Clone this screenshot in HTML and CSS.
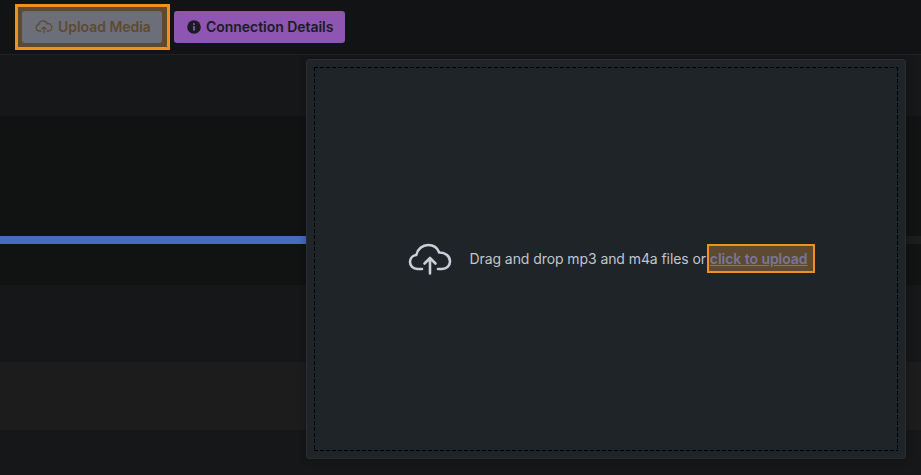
FILE: index.html
```html
<!DOCTYPE html>
<html lang="en">
<head>
<meta charset="utf-8">
<title>Upload Media</title>
<link rel="stylesheet" href="styles.css">
</head>
<body>
<header class="toolbar">
  <div class="highlight highlight-btn">
    <button class="btn btn-upload" type="button">
      <svg class="btn-icon" viewBox="0 0 20 16" width="18" height="15" fill="none" stroke="currentColor" stroke-width="1.4" stroke-linecap="round" stroke-linejoin="round"><path d="M6.5 13H4.6A3.6 3.6 0 0 1 4 5.900 5 5 0 0 1 13.600 5a4 4 0 0 1 2 8h-2.100"/><path d="M10 15V8.500M7.800 10.600 10 8.400l2.200 2.200"/></svg>
      <span class="btn-label">Upload Media</span>
    </button>
  </div>
  <button class="btn btn-conn" type="button">
    <svg class="btn-icon" viewBox="0 0 14 14" width="14" height="14"><circle cx="7" cy="7" r="6.800" fill="currentColor"/><rect x="6.100" y="6" width="1.800" height="4.600" fill="#8e55b2"/><rect x="6.100" y="3.200" width="1.800" height="1.700" fill="#8e55b2"/></svg>
    <span class="btn-label">Connection Details</span>
  </button>
</header>
<main class="content">
  <div class="rows">
    <div class="row r1"></div>
    <div class="row r2"></div>
    <div class="row r3"><div class="progress"></div></div>
    <div class="row r4"></div>
    <div class="row r5"></div>
    <div class="row r6"></div>
    <div class="row r7"></div>
  </div>
  <section class="panel">
    <div class="dropzone">
      <svg class="cloud" viewBox="0 0 44 32" width="44" height="32" fill="none" stroke="#c7d0d9" stroke-width="2.600" stroke-linecap="round" stroke-linejoin="round"><path d="M14 26H9.500C5 26 2 22.800 2 19c0-3.700 2.700-6.600 6.300-7C9.500 6.200 14.400 2 20.200 2c5 0 9.300 3 11 7.500C37.500 9.300 42 13.300 42 18.500c0 4.300-3.500 7.500-8 7.500h-4"/><path d="M22 30.500V15M16.500 20.500 22 15l5.500 5.500"/></svg>
      <p class="drop-text">Drag and drop mp3 and m4a files or <a class="link" href="#">click to upload</a></p>
    </div>
  </section>
</main>
</body>
</html>
```

FILE: styles.css
```css
* { box-sizing: border-box; }
html, body { margin: 0; height: 100%; }
body {
  width: 921px;
  height: 475px;
  overflow: hidden;
  background: #141619;
  font-family: Inter, "Liberation Sans", sans-serif;
  display: flex;
  flex-direction: column;
}
.toolbar {
  height: 55px;
  flex: none;
  display: flex;
  align-items: center;
  gap: 4px;
  padding: 0 0 1px 15px;
  background: #111315;
  border-bottom: 1px solid #202226;
}
.highlight {
  background: #5e4a30;
  border: 3px solid #f2901f;
}
.highlight-btn {
  width: 155px;
  height: 46px;
  padding: 4px;
  display: flex;
}
.btn {
  height: 32px;
  border: 0;
  border-radius: 3px;
  display: flex;
  align-items: center;
  font: 600 14px/1 Inter, "Liberation Sans", sans-serif;
  padding: 0;
}
.btn-label { letter-spacing: -0.04px; }
.btn-upload {
  width: 140px;
  background: #6c6f7a;
  color: #5e4a30;
  padding-left: 13px;
  gap: 5px;
}
.btn-conn {
  width: 171px;
  background: #8e55b2;
  color: #1a1b22;
  padding-left: 13px;
  gap: 5px;
}
.btn-icon { flex: none; }
.content {
  position: relative;
  flex: 1;
  min-height: 0;
}
.rows { display: flex; flex-direction: column; height: 100%; }
.row { flex: none; }
.r1 { height: 61px; background: #151718; }
.r2 { height: 120px; background: #111312; }
.r3 { height: 8px; background: #1b1c1c; }
.progress { width: 306px; height: 100%; background: #476cbc; }
.r4 { height: 41px; background: #111312; }
.r5 { height: 77px; background: #151718; }
.r6 { height: 68px; background: #1c1c1c; }
.r7 { height: 45px; background: #151718; }
.panel {
  position: absolute;
  left: 306px;
  top: 4px;
  width: 600px;
  height: 400px;
  padding: 7px;
  background: #1f2428;
  border: 1px solid #2a2e32;
  border-radius: 3px;
  box-shadow: 0 0 8px rgba(0, 0, 0, 0.3);
}
.dropzone {
  height: 100%;
  background-image:
    repeating-linear-gradient(90deg, #000 0 4px, transparent 4px 6px),
    repeating-linear-gradient(90deg, #000 0 4px, transparent 4px 6px),
    repeating-linear-gradient(180deg, #000 0 4px, transparent 4px 6px),
    repeating-linear-gradient(180deg, #000 0 4px, transparent 4px 6px);
  background-size: 100% 1px, 100% 1px, 1px 100%, 1px 100%;
  background-position: 0 0, 0 100%, 0 0, 100% 0;
  background-repeat: no-repeat;
  display: flex;
  align-items: center;
  justify-content: center;
  gap: 18px;
  padding-left: 10px;
}
.cloud { flex: none; }
.drop-text {
  margin: 0;
  font-size: 14px;
  line-height: 20px;
  color: #bfc6cf;
  white-space: nowrap;
  letter-spacing: -0.08px;
}
.link {
  position: relative;
  z-index: 0;
  margin-right: 7px;
  color: #77779c;
  font-weight: 600;
  letter-spacing: -0.05px;
}
.link::before {
  content: "";
  position: absolute;
  z-index: -1;
  left: -3px;
  right: -7px;
  top: -6px;
  bottom: -6px;
  background: #5e4a30;
  border: 2px solid #f2901f;
}
```
